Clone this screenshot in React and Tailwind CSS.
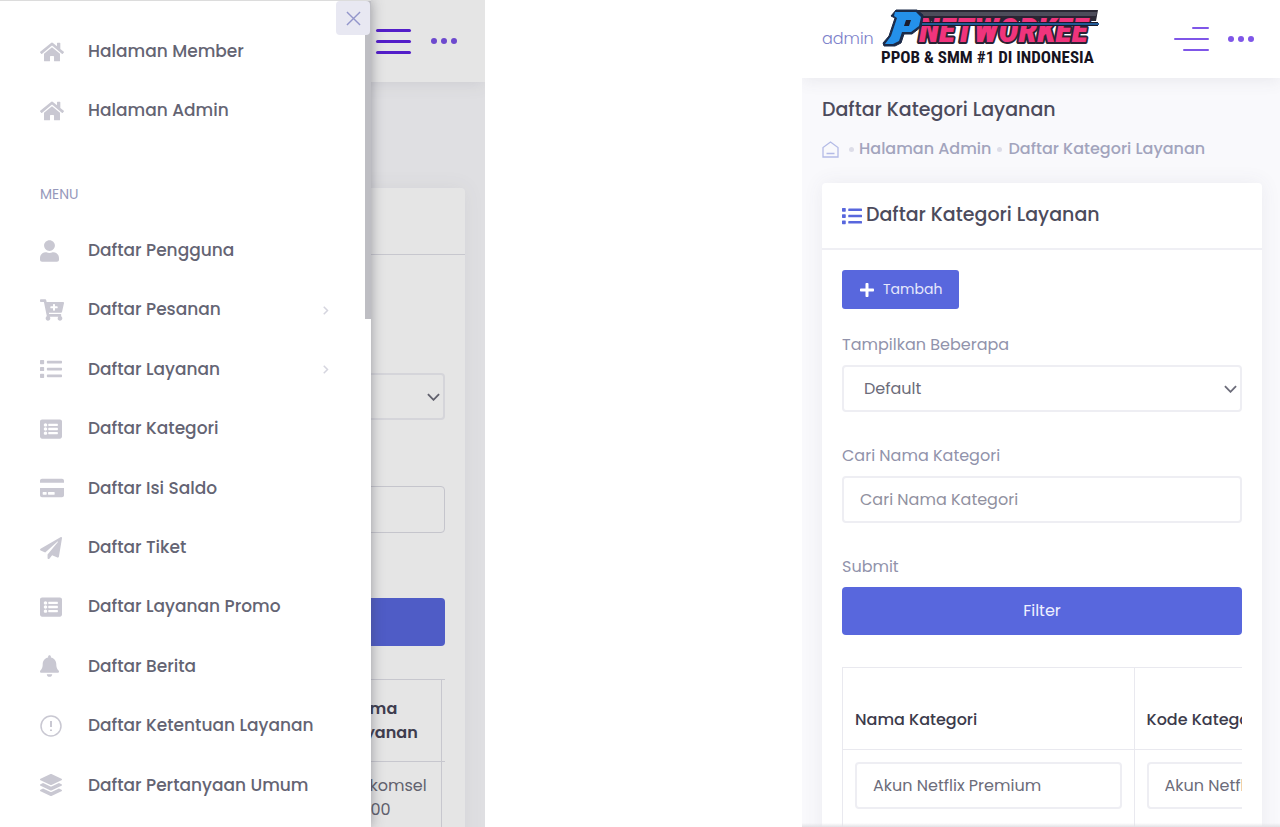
import {
  FaBell,
  FaCartPlus,
  FaCreditCard,
  FaHome,
  FaLayerGroup,
  FaList,
  FaListAlt,
  FaPaperPlane,
  FaPlus,
  FaUser,
} from 'react-icons/fa'

const TOP_LINKS = [
  { label: 'Halaman Member', icon: FaHome, width: 'w-6' },
  { label: 'Halaman Admin', icon: FaHome, width: 'w-6' },
]

const MENU_LINKS = [
  { label: 'Daftar Pengguna', icon: FaUser, width: 'w-[19px]' },
  { label: 'Daftar Pesanan', icon: FaCartPlus, width: 'w-6', nested: true },
  { label: 'Daftar Layanan', icon: FaList, nested: true },
  { label: 'Daftar Kategori', icon: FaListAlt },
  { label: 'Daftar Isi Saldo', icon: FaCreditCard, width: 'w-6' },
  { label: 'Daftar Tiket', icon: FaPaperPlane },
  { label: 'Daftar Layanan Promo', icon: FaListAlt },
  { label: 'Daftar Berita', icon: FaBell, width: 'w-[19px]' },
  { label: 'Daftar Ketentuan Layanan', icon: NoticeIcon },
  { label: 'Daftar Pertanyaan Umum', icon: FaLayerGroup },
]

function NoticeIcon({ className }) {
  return (
    <svg viewBox="0 0 22 22" className={className} fill="none" stroke="currentColor" aria-hidden="true">
      <circle cx="11" cy="11" r="10" strokeWidth="1.5" />
      <path d="M11 6v6M11 14.500v1.500" strokeWidth="2" />
    </svg>
  )
}

function Chevron({ className, d = 'M1 1l6 6 6-6', box = '0 0 14 8' }) {
  return (
    <svg viewBox={box} className={className} fill="none" stroke="currentColor" strokeWidth="2" aria-hidden="true">
      <path d={d} />
    </svg>
  )
}

function Dots({ className }) {
  return (
    <button type="button" aria-label="Lainnya" className={className}>
      <svg viewBox="0 0 26 6" className="block w-[26px] h-[6px]" fill="currentColor">
        <circle cx="3" cy="3" r="3" />
        <circle cx="13" cy="3" r="3" />
        <circle cx="23" cy="3" r="3" />
      </svg>
    </button>
  )
}

function SideLink({ item }) {
  const Icon = item.icon
  return (
    <li className="flex">
      <a href="#" className="flex flex-1 items-center pl-10 pr-[42px] text-[17px] font-medium text-[#646473]">
        <span className="w-12 shrink-0 text-[#c9c8d2]">
          <Icon className={`h-[22px] ${item.width || 'w-[22px]'}`} />
        </span>
        <span className="flex-1">{item.label}</span>
        {item.nested && <Chevron className="w-[6px] h-[9px] text-[#d5d5df]" box="0 0 8 12" d="M1 1l5 5-5 5" />}
      </a>
    </li>
  )
}

function Drawer() {
  return (
    <aside className="absolute inset-y-0 left-0 w-[371px] border-t border-[#dcdcdc] bg-white shadow-[0_0_12px_rgba(60,60,70,0.45)]">
      <div className="absolute right-0 top-0 w-[6px] h-[318px] bg-[#bebec3]" />
      <button
        type="button"
        aria-label="Tutup menu"
        className="absolute right-[1px] top-0 flex size-[34px] items-center justify-center rounded bg-[#e8e8f2] text-[#9396cb]"
      >
        <svg viewBox="0 0 16 16" className="size-[15px]" fill="none" stroke="currentColor" strokeWidth="1.5">
          <path d="M1 1l14 14M15 1L1 15" />
        </svg>
      </button>
      <nav>
        <ul className="grid auto-rows-[59px] pt-[21px]">
          {TOP_LINKS.map((item) => (
            <SideLink key={item.label} item={item} />
          ))}
        </ul>
        <h2 className="mt-11 pl-10 text-[14px] leading-5 text-[#9698bb]">MENU</h2>
        <ul className="mt-[17px] grid h-[594px] auto-rows-fr">
          {MENU_LINKS.map((item) => (
            <SideLink key={item.label} item={item} />
          ))}
        </ul>
      </nav>
    </aside>
  )
}

function SelectBox({ id, label, value }) {
  return (
    <div className="relative">
      <select
        id={id}
        aria-label={label}
        className="block h-[47px] w-full appearance-none rounded border-2 border-[#eeeef3] bg-white pl-5 text-[16px] text-[#6c6c7a]"
      >
        <option>{value}</option>
      </select>
      <Chevron className="pointer-events-none absolute right-[5px] top-5 w-[13px] h-[8px] text-[#6c6c7a]" />
    </div>
  )
}

function MenuScreen() {
  return (
    <section className="relative h-full overflow-hidden bg-[#f9f9fc]">
      <header className="flex h-[82px] items-center justify-end gap-5 bg-white pr-7 shadow-[0_2px_16px_rgba(80,80,100,0.12)]">
        <button type="button" aria-label="Menu" className="flex flex-col gap-2 w-[35px]">
          <span className="h-[3px] rounded bg-[#5d22e0]" />
          <span className="h-[3px] rounded bg-[#5d22e0]" />
          <span className="h-[3px] rounded bg-[#5d22e0]" />
        </button>
        <Dots className="text-[#7a52e6]" />
      </header>
      <div className="mx-5 mt-[106px] rounded bg-white shadow-[0_0_20px_rgba(80,80,100,0.08)]">
        <div className="h-[67px] border-b border-[#dedee6]" />
        <div className="px-5 pt-[118px] pb-20">
          <SelectBox id="left-limit" label="Tampilkan" value="" />
          <input
            type="text"
            aria-label="Cari"
            className="mt-[66px] block h-[47px] w-full rounded border border-[#dcdce4]"
          />
          <button type="button" aria-label="Filter" className="mt-[65px] block h-12 w-full rounded bg-[#5867dd]" />
          <div className="mt-[33px] overflow-hidden">
            <table className="w-full border-collapse text-left text-[16px] leading-6 text-[#6c6c7a]">
              <thead>
                <tr className="h-[82px] border-t border-b border-[#dedee6]">
                  <th />
                  <th className="w-[94px] border-r border-[#dedee6] font-semibold text-[#464457]">
                    Nama
                    <br />
                    Layanan
                  </th>
                  <th className="w-1" />
                </tr>
              </thead>
              <tbody>
                <tr>
                  <td />
                  <td className="border-r border-[#dedee6] py-3">
                    Telkomsel
                    <br />
                    5.000
                  </td>
                  <td />
                </tr>
              </tbody>
            </table>
          </div>
        </div>
      </div>
      <div className="absolute inset-0 bg-black/10" />
      <Drawer />
    </section>
  )
}

function Logo() {
  return (
    <svg viewBox="0 0 220 60" className="h-[60px] w-[220px] shrink-0" role="img" aria-label="PNetworkee">
      <path d="M36 1H217L215 12H38z" fill="#2a2834" />
      <path d="M36 3H216L215 7H36z" fill="#4d4c5a" />
      <g
        fontFamily="'Roboto Condensed', 'Liberation Sans', sans-serif"
        fontStyle="italic"
        fontWeight="900"
        fontSize="34"
        strokeLinejoin="round"
        paintOrder="stroke"
      >
        <text x="38" y="33" fill="#f0347c" stroke="#2a2334" strokeWidth="4">
          NETWORKEE
        </text>
      </g>
      <path d="M40 15H217" stroke="#1b1b2c" strokeWidth="4" />
      <path d="M40 15H218" stroke="#225a96" strokeWidth="2" />
      <path
        d="M15 1H36L42 6 40 18 31 25H23L20 34 14 37H3L2 34 8 27 14 9 10 7z"
        fill="#1b2a48"
        stroke="#1b2a48"
        strokeWidth="1"
        strokeLinejoin="round"
      />
      <path d="M14 3H35L40 8 38 17 30 23H21L18 32 12 35H4L10 27 16 9 13 7z" fill="#2490ea" />
      <path d="M25 11H30L28 17H23z" fill="#1b1b2c" />
      <text
        x="0"
        y="54"
        fontFamily="'Roboto Condensed', 'Liberation Sans', sans-serif"
        fontWeight="700"
        fontSize="17"
        fill="#17141f"
      >
        PPOB &amp; SMM #1 DI INDONESIA
      </text>
    </svg>
  )
}

function TextCell({ label, value }) {
  return (
    <td className="border border-[#e9e9ef] px-3 pt-3 pb-8">
      <input
        type="text"
        aria-label={label}
        defaultValue={value}
        className="block h-[47px] w-full rounded border-2 border-[#eeeef3] px-4 text-[16px] text-[#6c6c7a]"
      />
    </td>
  )
}

function CategoryScreen() {
  return (
    <section className="relative h-full overflow-hidden bg-[#f9f9fc]">
      <header className="flex h-[78px] items-center bg-white pl-5 pr-[26px] shadow-[0_2px_16px_rgba(80,80,100,0.1)]">
        <a href="#" className="w-[59px] shrink-0 text-[16px] font-light text-[#7c7fca]">
          admin
        </a>
        <Logo />
        <button type="button" aria-label="Menu" className="ml-auto flex w-[35px] flex-col items-end gap-[9px]">
          <span className="h-[2px] w-[17px] rounded bg-[#7f56e8]" />
          <span className="h-[2px] w-[35px] rounded bg-[#7f56e8]" />
          <span className="h-[2px] w-[26px] rounded bg-[#7f56e8]" />
        </button>
        <Dots className="ml-[19px] text-[#7f56e8]" />
      </header>

      <div className="px-5 pt-[18px]">
        <h1 className="text-[19px] leading-7 font-medium text-[#4c4b5c]">Daftar Kategori Layanan</h1>
        <nav className="mt-[13px] flex items-center text-[16px] leading-6 font-medium text-[#a2a4bd]">
          <a href="#" aria-label="Beranda" className="mr-[10px] text-[#b4bbe6]">
            <svg viewBox="0 0 17 17" className="size-[17px]" fill="none" stroke="currentColor" strokeWidth="1.3">
              <path d="M1 16V6.500L8.500 1 16 6.500V16zM4.500 12.500H12.500" />
            </svg>
          </a>
          <span className="mr-[5px] size-[5px] rounded-full bg-[#dddde8]" />
          <a href="#">Halaman Admin</a>
          <span className="mx-[6px] size-[5px] rounded-full bg-[#dddde8]" />
          <a href="#">Daftar Kategori Layanan</a>
        </nav>
      </div>

      <div className="ml-5 mr-[18px] mt-[22px] rounded bg-white shadow-[0_0_20px_rgba(80,80,100,0.08)]">
        <div className="flex h-[67px] items-center gap-1 border-b-2 border-[#efeff4] px-5">
          <FaList size={20} className="text-[#5867dd]" />
          <h2 className="text-[19px] font-medium text-[#4c4b5c]">Daftar Kategori Layanan</h2>
        </div>
        <div className="px-5 pt-5 pb-10 text-[16px] text-[#9193ab]">
          <button
            type="button"
            className="flex h-[39px] items-center gap-2 rounded-[3px] bg-[#5867dd] px-[17px] text-[14px] text-[#e6e8fb]"
          >
            <FaPlus size={16} className="text-white" />
            Tambah
          </button>

          <label htmlFor="limit" className="mt-[24px] mb-[8px] block leading-6">
            Tampilkan Beberapa
          </label>
          <SelectBox id="limit" value="Default" />

          <label htmlFor="search" className="mt-[32px] mb-[8px] block leading-6">
            Cari Nama Kategori
          </label>
          <input
            id="search"
            type="text"
            placeholder="Cari Nama Kategori"
            className="block h-[47px] w-full rounded border-2 border-[#eeeef3] px-4 placeholder:text-[#91919f]"
          />

          <label htmlFor="submit" className="mt-[32px] mb-[8px] block leading-6">
            Submit
          </label>
          <button id="submit" type="button" className="block h-12 w-full rounded bg-[#5867dd] text-[#eef0ff]">
            Filter
          </button>

          <div className="mt-8 overflow-hidden">
            <table className="w-[584px] table-fixed border-collapse text-left">
              <thead>
                <tr className="h-[82px] font-medium text-[#3c3b4b]">
                  <th className="border border-[#e9e9ef] px-3 pb-[17px] align-bottom font-medium">Nama Kategori</th>
                  <th className="border border-[#e9e9ef] px-3 pb-[17px] align-bottom font-medium">Kode Kategori</th>
                </tr>
              </thead>
              <tbody>
                <tr>
                  <TextCell label="Nama Kategori" value="Akun Netflix Premium" />
                  <TextCell label="Kode Kategori" value="Akun Netflix Premium" />
                </tr>
              </tbody>
            </table>
          </div>
        </div>
      </div>
      <div className="absolute inset-x-0 bottom-0 h-1 bg-linear-to-b from-transparent to-[#e2e2e6]" />
    </section>
  )
}

export default function App() {
  return (
    <main className="grid h-screen grid-cols-[485fr_478fr] gap-x-[317px] overflow-hidden bg-white font-['Poppins','Inter',sans-serif]">
      <MenuScreen />
      <CategoryScreen />
    </main>
  )
}
